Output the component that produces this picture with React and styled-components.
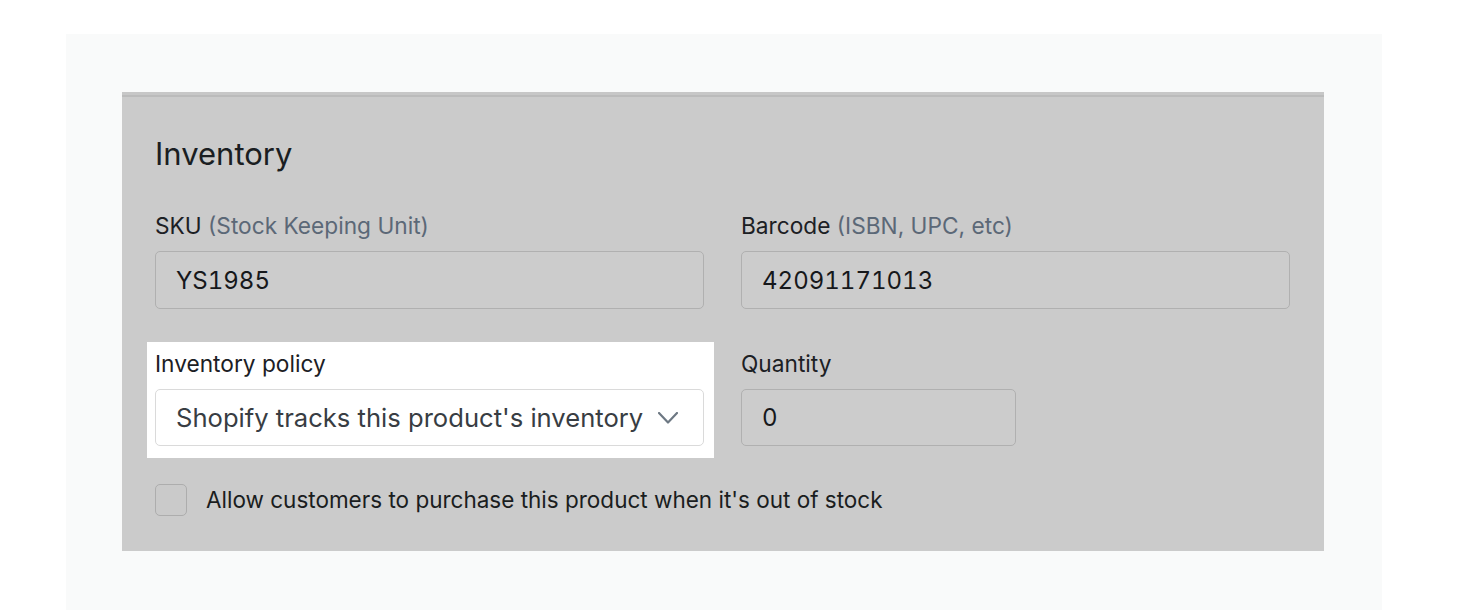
import React from 'react';
import styled, { createGlobalStyle } from 'styled-components';

const Global = createGlobalStyle`
  html, body { margin: 0; padding: 0; background: #ffffff; }
  body { font-family: Inter, "Liberation Sans", Arial, sans-serif; -webkit-font-smoothing: antialiased; }
  * { box-sizing: border-box; }
`;

const Page = styled.div`
  width: 1468px;
  height: 610px;
  overflow: hidden;
  padding: 34px 0 0 66px;
`;

const Backdrop = styled.div`
  width: 1316px;
  height: 576px;
  background: #f9fafa;
  padding: 58px 0 0 56px;
`;

const Card = styled.section`
  width: 1202px;
  height: 459px;
  background: #cbcbcb;
  border-top: 3px solid #c7c7c7;
  box-shadow: inset 0 2px 0 #bbbbbb;
  padding: 39px 33px 0 33px;
`;

const Title = styled.h2`
  margin: 0;
  font-size: 31px;
  line-height: 40px;
  font-weight: 400;
  color: #1a1e22;
`;

const FieldGrid = styled.div`
  margin-top: 40px;
  display: grid;
  grid-template-columns: 549px 549px;
  column-gap: 37px;
  row-gap: 43px;
`;

const Field = styled.div`
  display: flex;
  flex-direction: column;
  gap: 13px;
  ${p => p.$highlight && `
    background: #ffffff;
    margin: -10px -10px -12px -8px;
    padding: 10px 10px 12px 8px;
  `}
`;

const Label = styled.label`
  font-size: 22.7px;
  line-height: 24px;
  color: #1c2024;
  white-space: nowrap;
`;

const Hint = styled.span`
  color: #5b6877;
`;

const TextBox = styled.div`
  height: ${p => p.$h || 58}px;
  width: ${p => p.$w ? `${p.$w}px` : '100%'};
  border: 1px solid #b0b0b0;
  border-radius: 5px;
  background: #cccccc;
  display: flex;
  align-items: center;
  padding: 0 20px;
  font-size: 24px;
  font-feature-settings: "tnum" 1;
  color: #16181b;
`;

const SelectBox = styled.div`
  height: 57px;
  border: 1px solid #dadada;
  border-radius: 5px;
  background: #ffffff;
  display: flex;
  align-items: center;
  justify-content: space-between;
  padding: 0 25px 0 20px;
  font-size: 25.6px;
  color: #383d43;
  white-space: nowrap;
`;

const Chevron = styled.svg`
  width: 20px;
  height: 12px;
  flex: none;
`;

const CheckRow = styled.div`
  margin-top: 38px;
  display: flex;
  align-items: center;
  gap: 19px;
`;

const CheckBox = styled.span`
  width: 32px;
  height: 32px;
  border: 1px solid #adadad;
  border-radius: 5px;
  background: #cacaca;
  flex: none;
`;

const CheckLabel = styled.span`
  font-size: 22.5px;
  line-height: 28px;
  color: #1a1d20;
`;

export default function App() {
  return (
    <>
      <Global />
      <Page>
        <Backdrop>
          <Card>
            <Title>Inventory</Title>
            <FieldGrid>
              <Field>
                <Label>SKU <Hint>(Stock Keeping Unit)</Hint></Label>
                <TextBox>YS1985</TextBox>
              </Field>
              <Field>
                <Label>Barcode <Hint>(ISBN, UPC, etc)</Hint></Label>
                <TextBox>42091171013</TextBox>
              </Field>
              <Field $highlight>
                <Label>Inventory policy</Label>
                <SelectBox>
                  <span>Shopify tracks this product's inventory</span>
                  <Chevron viewBox="0 0 20 12" fill="none">
                    <polyline points="1,1 10,10.5 19,1" stroke="#6d7883" strokeWidth="2.2" strokeLinecap="round" strokeLinejoin="round" />
                  </Chevron>
                </SelectBox>
              </Field>
              <Field>
                <Label>Quantity</Label>
                <TextBox $w={275} $h={57}>0</TextBox>
              </Field>
            </FieldGrid>
            <CheckRow>
              <CheckBox />
              <CheckLabel>Allow customers to purchase this product when it's out of stock</CheckLabel>
            </CheckRow>
          </Card>
        </Backdrop>
      </Page>
    </>
  );
}
